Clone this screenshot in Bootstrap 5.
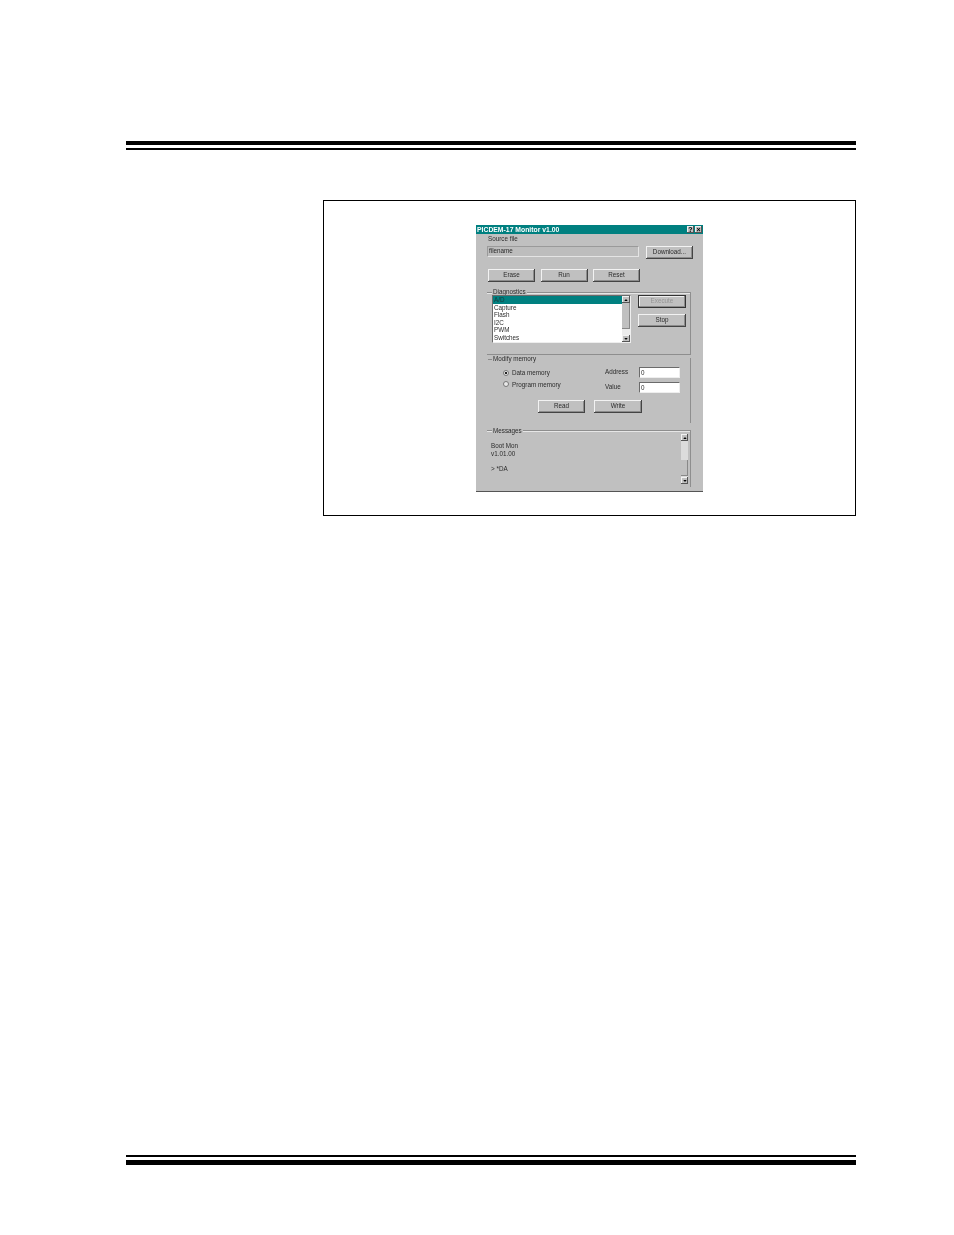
<!DOCTYPE html>
<html lang="en">
<head>
<meta charset="utf-8">
<title>PICDEM-17 Monitor</title>
<link href="https://cdn.jsdelivr.net/npm/bootstrap@5.3.0/dist/css/bootstrap.min.css" rel="stylesheet">
<style>
html,body{background:#fff;margin:0}
.sheet{width:730px;height:1235px;margin-left:126px;padding-top:141px;overflow:hidden}
.rule-head{height:9px;border-top:4px solid #000;border-bottom:2px solid #000}
.rule-foot{height:10px;margin-top:639px;border-top:2px solid #000;border-bottom:5px solid #000}
.figure-box{width:533px;height:316px;margin-left:197px;margin-top:50px;border:1px solid #000;padding:24px 0 0 152px}
.dlg{width:227px;height:267px;background:#c0c0c0;border-bottom:1px solid #555;color:#2b2b2b;font:6.3px/7.5px "Liberation Sans",Arial,sans-serif;filter:blur(.3px)}
.dlg-title{height:9px;background:#008080;color:#fff;font-weight:700;font-size:6.8px;letter-spacing:.02px;line-height:9px;padding:0 1px}
.dlg-tbtn{width:7px;height:7px;background:#c0c0c0;color:#000;font-size:7px;line-height:7px;text-align:center;box-shadow:inset -1px -1px 0 #555,inset 1px 1px 0 #eee;margin-left:1px}
.src-label{margin:1px 0 0 12px;height:8px;line-height:8px}
.src-row{margin:3px 0 0 11px;height:13px}
.src-field{width:152px;height:11px;padding-left:1px;line-height:8px;background:#bdbdbd;border:1px solid;border-color:#9a9a9a #e4e4e4 #e4e4e4 #9a9a9a}
.w-btn{width:47px;height:13px;padding:0 0 2px;border:0;border-radius:0;background:#c0c0c0;color:#2b2b2b;font:6.3px/11px "Liberation Sans",Arial,sans-serif;box-shadow:inset -1px -1px 0 #444,inset 1px 1px 0 #f2f2f2,inset -2px -2px 0 #8c8c8c}
.w-btn:hover{background:#c0c0c0;color:#2b2b2b}
.w-btn.is-off{opacity:1;background:#c0c0c0;color:#959595;border:0;box-shadow:inset -1px -1px 0 #333,inset 1px 1px 0 #333,inset -2px -2px 0 #8c8c8c,inset 2px 2px 0 #eee}
.ml-dl{margin-left:7px}
.act-row{margin:10px 0 0 12px;gap:5.500px;height:13px}
.grp{position:relative;width:204px;margin-left:11px}
.grp-cap{position:absolute;top:-4px;left:5px;background:#c0c0c0;padding:0 1px;line-height:8px;white-space:nowrap}
.grp-dash{position:absolute;top:0;left:1px;width:4px;border-top:1px solid #8a8a8a}
.grp-diag{height:63px;margin-top:10px;padding:2px 0 0 5px;border:1px solid #8e8e8e;border-left:0;box-shadow:inset 0 1px 0 #e6e6e6}
.grp-diag .grp-cap{top:-5px}
.pick{width:139px;height:48px;background:#fff;border:1px solid;border-color:#6b6b6b #eee #eee #6b6b6b;position:relative}
.pick-item{height:7.5px;line-height:7.5px;padding-left:1px;color:#2b2b2b}
.pick-item.on{background:#008080;color:#17393b}
.sbar{display:flex;flex-direction:column;width:8px}
.sbar-pick{position:absolute;right:0;top:0;bottom:0}
.sbar-arrow{height:7px;flex:none;background:#c0c0c0;box-shadow:inset -1px -1px 0 #555,inset 1px 1px 0 #f2f2f2;display:flex;align-items:center;justify-content:center}
.sbar-thumb{background:#c0c0c0;box-shadow:inset -1px -1px 0 #888}
.sbar-track{background:#ececec}
.sbar-msg .sbar-track{background:#dcdcdc}
.t-26{height:26px}.t-19{height:19px}.t-16{height:16px}
.sbar-fill{flex:1 1 auto}
.side-btns{margin-left:7px;gap:6px;width:48px}
.side-btns .w-btn{width:48px}
.grp-mem{height:65px;margin-top:3px;padding-top:9px;border-right:1px solid #8e8e8e}
.grp-mem .grp-cap{top:-3px}
.grp-mem .grp-dash{top:1px}
.mem-left{width:102px;margin-left:16px}
.mem-radio{height:11.5px;gap:3px;line-height:11px}
.mem-radio .form-check-input{width:6px;height:6px;margin:0;flex:none;background-color:#e8e8e8;border:1px solid #777;box-shadow:none}
.mem-radio .form-check-input:checked{background-color:#e8e8e8;background-image:radial-gradient(circle,#222 38%,transparent 48%);background-size:auto;border-color:#777}
.mem-line{height:11px;margin-bottom:4px}
.mem-label{width:34px;line-height:10px}
.mem-line .form-control{width:41px;height:11px;min-height:0;padding:0 0 1px 1px;font:6.3px/8px "Liberation Sans",Arial,sans-serif;border-radius:0;border:1px solid;border-color:#6b6b6b #eee #eee #6b6b6b;color:#2b2b2b;background:#fff}
.mem-btns{margin:3px 0 0 51px;gap:9px;height:13px}
.mem-btns .w-btn:last-child{width:48px}
.grp-msg{height:57px;margin-top:7px;padding:3px 2px 0 4px;border-top:1px solid #8e8e8e;border-right:1px solid #8e8e8e;box-shadow:inset 0 1px 0 #e6e6e6}
.msg-text{padding-top:8px}
.msg-text p{margin:0;height:7.5px;white-space:pre}
.sbar-msg{height:50px;width:7px}
</style>
</head>
<body>
<div class="sheet">
  <div class="rule-head"></div>
  <div class="figure-box">
    <div class="dlg">
      <div class="dlg-title d-flex align-items-center">
        <span class="flex-grow-1">PICDEM-17 Monitor v1.00</span>
        <span class="dlg-tbtn">?</span>
        <span class="dlg-tbtn">×</span>
      </div>
      <div class="src-label">Source file</div>
      <div class="src-row d-flex align-items-start">
        <div class="src-field">filename</div>
        <button type="button" class="btn w-btn ml-dl">Download...</button>
      </div>
      <div class="act-row d-flex">
        <button type="button" class="btn w-btn">Erase</button>
        <button type="button" class="btn w-btn">Run</button>
        <button type="button" class="btn w-btn">Reset</button>
      </div>

      <div class="grp grp-diag d-flex align-items-start">
        <span class="grp-cap">Diagnostics</span>
        <div class="pick">
          <div class="pick-item on">A/D</div>
          <div class="pick-item">Capture</div>
          <div class="pick-item">Flash</div>
          <div class="pick-item">I2C</div>
          <div class="pick-item">PWM</div>
          <div class="pick-item">Switches</div>
          <div class="sbar sbar-pick">
            <div class="sbar-arrow"><svg width="4" height="2" viewBox="0 0 5 3"><path d="M2.500 0 5 3H0z" fill="#000"/></svg></div>
            <div class="sbar-thumb t-26"></div>
            <div class="sbar-track sbar-fill"></div>
            <div class="sbar-arrow"><svg width="4" height="2" viewBox="0 0 5 3"><path d="M0 0h5L2.500 3z" fill="#000"/></svg></div>
          </div>
        </div>
        <div class="side-btns d-flex flex-column">
          <button type="button" class="btn w-btn is-off" disabled>Execute</button>
          <button type="button" class="btn w-btn">Stop</button>
        </div>
      </div>

      <div class="grp grp-mem">
        <span class="grp-dash"></span>
        <span class="grp-cap">Modify memory</span>
        <div class="d-flex">
          <div class="mem-left">
            <label class="mem-radio d-flex align-items-center"><input class="form-check-input" type="radio" name="mem" checked>Data memory</label>
            <label class="mem-radio d-flex align-items-center"><input class="form-check-input" type="radio" name="mem">Program memory</label>
          </div>
          <div>
            <div class="mem-line d-flex"><span class="mem-label">Address</span><input class="form-control" type="text" value="0"></div>
            <div class="mem-line d-flex"><span class="mem-label">Value</span><input class="form-control" type="text" value="0"></div>
          </div>
        </div>
        <div class="mem-btns d-flex">
          <button type="button" class="btn w-btn">Read</button>
          <button type="button" class="btn w-btn">Write</button>
        </div>
      </div>

      <div class="grp grp-msg d-flex justify-content-between align-items-start">
        <span class="grp-cap">Messages</span>
        <div class="msg-text">
          <p>Boot Mon</p>
          <p>v1.01.00</p>
          <p> </p>
          <p>&gt; *DA</p>
        </div>
        <div class="sbar sbar-msg">
          <div class="sbar-arrow"><svg width="4" height="2" viewBox="0 0 5 3"><path d="M2.500 0 5 3H0z" fill="#000"/></svg></div>
          <div class="sbar-track t-19"></div>
          <div class="sbar-thumb t-16"></div>
          <div class="sbar-track sbar-fill"></div>
          <div class="sbar-arrow"><svg width="4" height="2" viewBox="0 0 5 3"><path d="M0 0h5L2.500 3z" fill="#000"/></svg></div>
        </div>
      </div>
    </div>
  </div>
  <div class="rule-foot"></div>
</div>
<script src="https://cdn.jsdelivr.net/npm/bootstrap@5.3.0/dist/js/bootstrap.bundle.min.js"></script>
</body>
</html>
